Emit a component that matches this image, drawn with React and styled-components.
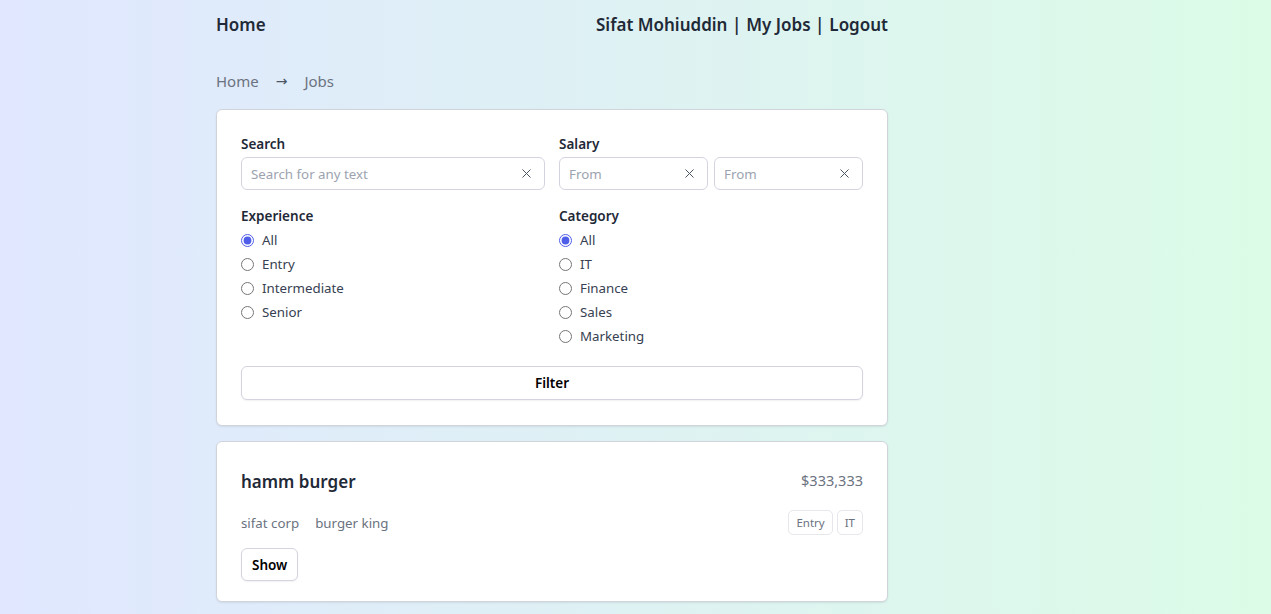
import React, {useState} from 'react';
import styled, {createGlobalStyle} from 'styled-components';
import {X} from 'lucide-react';

const GlobalStyle = createGlobalStyle`
	html, body {
		margin: 0;
		padding: 0;
	}
	body {
		min-height: 100vh;
		font-family: 'Noto Sans', 'Open Sans', sans-serif;
		color: #374151;
		background: linear-gradient(to right, #e0e7ff, #dcfce7);
	}
`;

const Page = styled.div`
	width: 672px;
	margin-left: 216px;
	padding-bottom: 24px;
`;

const Nav = styled.nav`
	display: flex;
	justify-content: space-between;
	align-items: center;
	height: 48px;
	font-size: 17px;
	font-weight: 600;
	color: #1f2937;
`;

const NavLinks = styled.div`
	display: flex;
	gap: 5px;
`;

const Breadcrumb = styled.div`
	display: flex;
	gap: 17px;
	margin-top: 21px;
	height: 24px;
	align-items: center;
	font-size: 15px;
	color: #6b7280;
`;

const Arrow = styled.span`
	font-family: 'DejaVu Sans', sans-serif;
	font-size: 14px;
	color: #4b5563;
`;

const Card = styled.div`
	background: #fff;
	border: 1px solid #d1d5db;
	border-radius: 6px;
	box-shadow: 0 1px 2px rgba(0, 0, 0, 0.08);
	padding: ${(p) => p.$pad || '24px'};
	margin-top: ${(p) => p.$top || '16px'};
`;

const Grid = styled.div`
	display: grid;
	grid-template-columns: minmax(0, 1fr) minmax(0, 1fr);
	column-gap: 14px;
	row-gap: 16px;
`;

const Label = styled.div`
	font-size: 13.5px;
	font-weight: 600;
	color: #1f2937;
	line-height: 20px;
	margin-bottom: 3px;
`;

const InputRow = styled.div`
	display: flex;
	gap: 6px;
`;

const InputBox = styled.div`
	flex: 1;
	min-width: 0;
	display: flex;
	align-items: center;
	height: 33px;
	box-sizing: border-box;
	border: 1px solid #d4d4e0;
	border-radius: 6px;
	padding: 0 10px 0 9px;
	color: #4b5563;
	svg {
		flex-shrink: 0;
	}
`;

const Input = styled.input`
	flex: 1;
	min-width: 0;
	padding: 0;
	border: none;
	outline: none;
	background: transparent;
	font-family: inherit;
	font-size: 13.3px;
	color: #1f2937;
	&::placeholder {
		color: #9ca3af;
	}
`;

const RadioList = styled.div`
	display: flex;
	flex-direction: column;
	margin-top: -1px;
`;

const RadioLabel = styled.label`
	display: flex;
	align-items: center;
	gap: 8px;
	height: 24px;
	font-size: 13.3px;
	color: #374151;
	input {
		margin: 0;
		width: 13px;
		height: 13px;
		accent-color: #4f5ee8;
	}
`;

const Button = styled.button`
	height: ${(p) => (p.$full ? '34px' : '33px')};
	width: ${(p) => (p.$full ? '100%' : 'auto')};
	padding: 0 10px;
	margin-top: ${(p) => p.$top || '0'};
	background: #fff;
	border: 1px solid #d4d4e0;
	border-radius: 6px;
	box-shadow: 0 1px 2px rgba(0, 0, 0, 0.06);
	font-family: inherit;
	font-size: 13.5px;
	font-weight: 600;
	color: #000;
	cursor: pointer;
`;

const JobHead = styled.div`
	display: flex;
	justify-content: space-between;
	align-items: flex-start;
	margin-top: 13px;
`;

const JobTitle = styled.div`
	font-size: 17px;
	font-weight: 600;
	color: #1f2937;
	line-height: 28px;
`;

const Price = styled.div`
	font-size: 14.5px;
	color: #6b7280;
	line-height: 24px;
`;

const JobMeta = styled.div`
	display: flex;
	justify-content: space-between;
	align-items: center;
	margin-top: 14px;
`;

const Muted = styled.div`
	display: flex;
	gap: 16px;
	font-size: 13.3px;
	color: #6b7280;
`;

const Tags = styled.div`
	display: flex;
	gap: 4px;
`;

const Tag = styled.span`
	display: inline-flex;
	align-items: center;
	height: 25px;
	padding: 0 7px;
	box-sizing: border-box;
	border: 1px solid #e5e7eb;
	border-radius: 5px;
	font-size: 11.5px;
	color: #6b7280;
`;

const ClearInput = ({placeholder}) => {
	const [value, setValue] = useState('');
	return (
		<InputBox>
			<Input
				placeholder={placeholder}
				value={value}
				onChange={(e) => setValue(e.target.value)}
			/>
			<X size={15} strokeWidth={1.6} onClick={() => setValue('')} />
		</InputBox>
	);
};

const RadioGroup = ({name, options}) => {
	const [picked, setPicked] = useState(options[0]);
	return (
		<RadioList>
			{options.map((o) => (
				<RadioLabel key={o}>
					<input
						type='radio'
						name={name}
						checked={picked === o}
						onChange={() => setPicked(o)}
					/>
					{o}
				</RadioLabel>
			))}
		</RadioList>
	);
};

const App = () => {
	return (
		<>
			<GlobalStyle />
			<Page>
				<Nav>
					<span>Home</span>
					<NavLinks>
						<span>Sifat Mohiuddin |</span>
						<span>My Jobs |</span>
						<span>Logout</span>
					</NavLinks>
				</Nav>
				<Breadcrumb>
					<span>Home</span>
					<Arrow>→</Arrow>
					<span>Jobs</span>
				</Breadcrumb>

				<Card $top='16px' $pad='24px 24px 25px'>
					<Grid>
						<div>
							<Label>Search</Label>
							<InputRow>
								<ClearInput placeholder='Search for any text' />
							</InputRow>
						</div>
						<div>
							<Label>Salary</Label>
							<InputRow>
								<ClearInput placeholder='From' />
								<ClearInput placeholder='From' />
							</InputRow>
						</div>
						<div>
							<Label>Experience</Label>
							<RadioGroup
								name='experience'
								options={['All', 'Entry', 'Intermediate', 'Senior']}
							/>
						</div>
						<div>
							<Label>Category</Label>
							<RadioGroup
								name='category'
								options={['All', 'IT', 'Finance', 'Sales', 'Marketing']}
							/>
						</div>
					</Grid>
					<Button $full $top='18px'>
						Filter
					</Button>
				</Card>

				<Card $top='15px' $pad='13px 24px 20px'>
					<JobHead>
						<JobTitle>hamm burger</JobTitle>
						<Price>$333,333</Price>
					</JobHead>
					<JobMeta>
						<Muted>
							<span>sifat corp</span>
							<span>burger king</span>
						</Muted>
						<Tags>
							<Tag>Entry</Tag>
							<Tag>IT</Tag>
						</Tags>
					</JobMeta>
					<Button $top='13px'>Show</Button>
				</Card>
			</Page>
		</>
	);
};

export default App;
